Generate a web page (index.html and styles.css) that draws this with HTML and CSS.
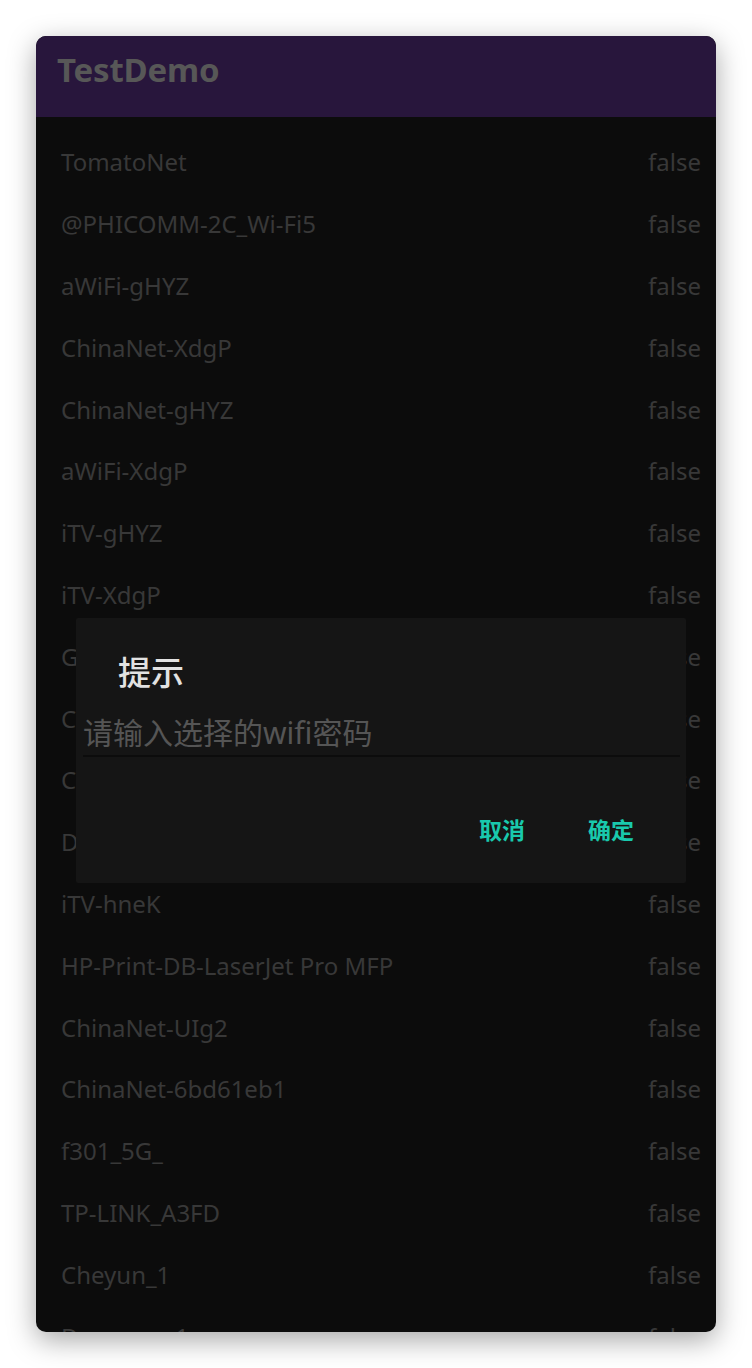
FILE: index.html
```html
<!DOCTYPE html>
<html lang="zh">
<head>
<meta charset="utf-8">
<title>TestDemo</title>
<link rel="stylesheet" href="styles.css">
</head>
<body>
<div class="phone">
  <header class="appbar"><h1 class="title">TestDemo</h1></header>
  <ul class="list">
    <li class="row"><span>TomatoNet</span><span>false</span></li>
    <li class="row"><span>@PHICOMM-2C_Wi-Fi5</span><span>false</span></li>
    <li class="row"><span>aWiFi-gHYZ</span><span>false</span></li>
    <li class="row"><span>ChinaNet-XdgP</span><span>false</span></li>
    <li class="row"><span>ChinaNet-gHYZ</span><span>false</span></li>
    <li class="row"><span>aWiFi-XdgP</span><span>false</span></li>
    <li class="row"><span>iTV-gHYZ</span><span>false</span></li>
    <li class="row"><span>iTV-XdgP</span><span>false</span></li>
    <li class="row"><span>Guest-5G</span><span>false</span></li>
    <li class="row"><span>ChinaNet-hneK</span><span>false</span></li>
    <li class="row"><span>CMCC-hneK</span><span>false</span></li>
    <li class="row"><span>DIRECT-hneK</span><span>false</span></li>
    <li class="row"><span>iTV-hneK</span><span>false</span></li>
    <li class="row"><span>HP-Print-DB-LaserJet Pro MFP</span><span>false</span></li>
    <li class="row"><span>ChinaNet-UIg2</span><span>false</span></li>
    <li class="row"><span>ChinaNet-6bd61eb1</span><span>false</span></li>
    <li class="row"><span>f301_5G_</span><span>false</span></li>
    <li class="row"><span>TP-LINK_A3FD</span><span>false</span></li>
    <li class="row"><span>Cheyun_1</span><span>false</span></li>
    <li class="row"><span>Dongyun_1</span><span>false</span></li>
  </ul>
  <div class="dialog">
    <div class="dlg-title">提示</div>
    <div class="dlg-input">请输入选择的wifi密码</div>
    <div class="dlg-actions">
      <span class="btn">取消</span>
      <span class="btn">确定</span>
    </div>
  </div>
</div>
</body>
</html>
```
FILE: styles.css
```css
html, body {
  margin: 0;
  padding: 0;
  background: #ffffff;
}
body {
  font-family: "Noto Sans", "Noto Sans CJK SC", sans-serif;
}
.phone {
  position: relative;
  margin: 36px;
  width: 680px;
  height: 1296px;
  border-radius: 10px;
  overflow: hidden;
  background: #0c0c0c;
  box-shadow: 0 8px 28px rgba(0, 0, 0, 0.35);
}
.appbar {
  height: 81px;
  background: #28163c;
  box-sizing: border-box;
  padding: 12px 0 0 21px;
}
.title {
  margin: 0;
  font-size: 33px;
  line-height: 44px;
  font-weight: 700;
  color: #575757;
  letter-spacing: -0.2px;
}
.list {
  list-style: none;
  margin: 0;
  padding: 14px 0 0 0;
}
.row {
  height: 61.8px;
  display: flex;
  align-items: center;
  justify-content: space-between;
  padding: 0 15px 0 25px;
  font-size: 24px;
  color: #383838;
}
.dialog {
  position: absolute;
  left: 40px;
  top: 582px;
  width: 610px;
  height: 265px;
  background: #151515;
  border-radius: 2px;
  box-sizing: border-box;
  padding-top: 33px;
}
.dlg-title {
  padding-left: 42px;
  font-size: 33px;
  line-height: 44px;
  color: #e2e2e2;
  font-weight: 500;
}
.dlg-input {
  margin: 17px 6px 0 7px;
  height: 45px;
  line-height: 42px;
  font-size: 30px;
  color: #555555;
  border-bottom: 2px solid #0c0c0c;
  box-sizing: border-box;
}
.dlg-actions {
  margin-top: 58px;
  display: flex;
  justify-content: flex-end;
  gap: 63px;
  padding-right: 52px;
}
.btn {
  font-size: 23px;
  line-height: 30px;
  font-weight: 700;
  color: #19c9ad;
}
```
